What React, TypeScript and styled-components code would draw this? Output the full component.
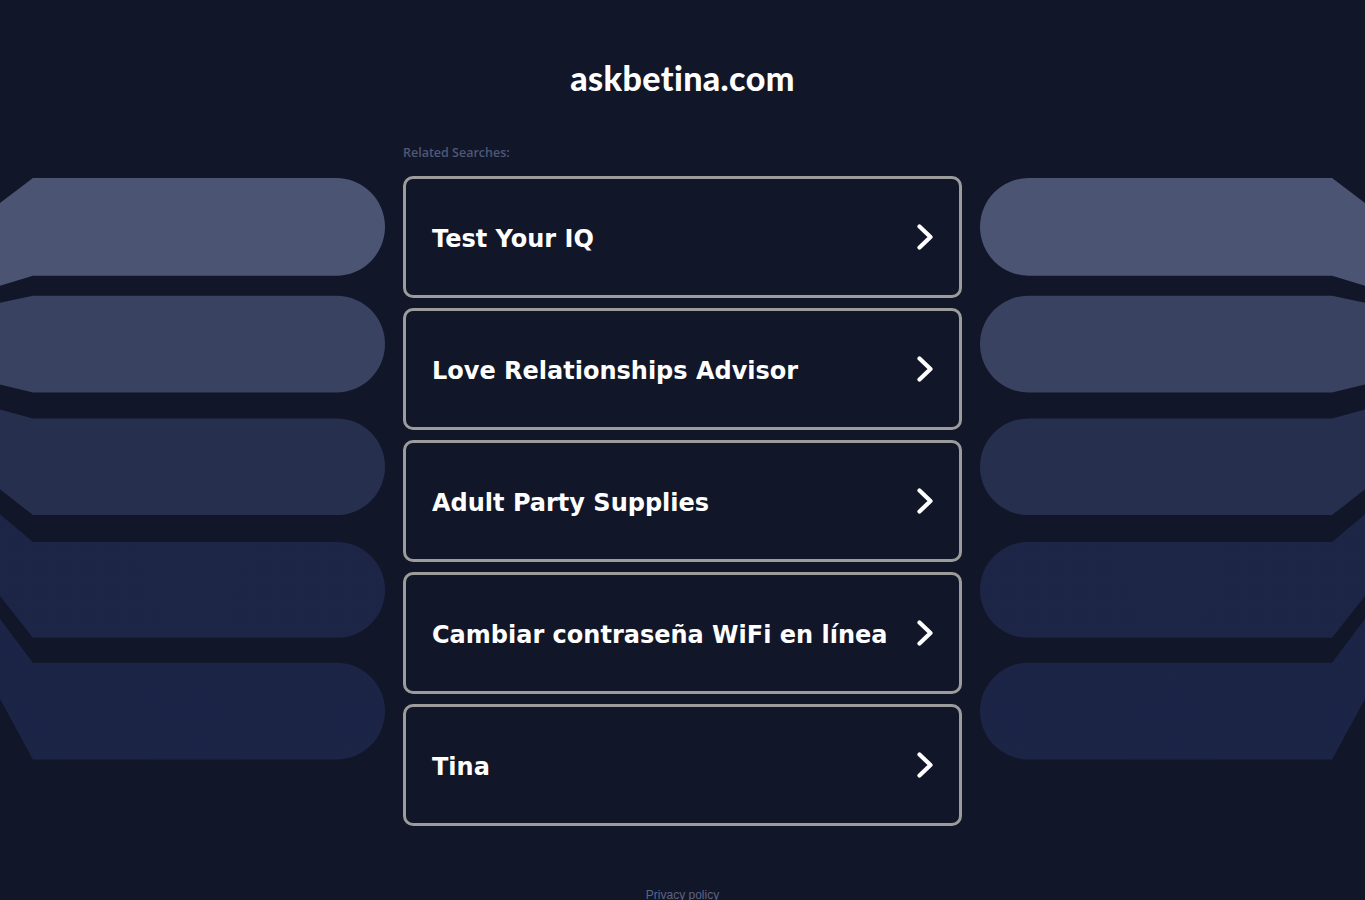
import React from 'react';
import styled, { createGlobalStyle } from 'styled-components';

const GlobalStyle = createGlobalStyle`
    html, body {
        margin: 0;
        padding: 0;
        background-color: #111729;
    }
`;

const Page = styled.div`
    min-height: 900px;
    display: flex;
    flex-direction: column;
    align-items: stretch;
    background-color: #111729;
    overflow: hidden;
`;

const Header = styled.h1`
    margin: 0;
    padding-top: 58px;
    height: 42px;
    line-height: 40px;
    text-align: center;
    font-family: Lato, 'Open Sans', sans-serif;
    font-weight: 900;
    font-size: 34px;
    letter-spacing: 0.4px;
    color: #ffffff;
`;

const Body = styled.div`
    display: grid;
    grid-template-columns: 1fr 559px 1fr;
    grid-template-rows: auto auto;
    column-gap: 18px;
    margin-top: 46px;
`;

const Label = styled.div`
    grid-column: 2;
    grid-row: 1;
    height: 14px;
    line-height: 14px;
    margin-bottom: 16px;
    font-family: 'Open Sans', Lato, sans-serif;
    font-weight: 600;
    font-size: 12.5px;
    color: #4f5877;
`;

const Side = styled.div<{ $flip?: boolean }>`
    grid-row: 2;
    grid-column: ${(p) => (p.$flip ? 3 : 1)};
    padding-top: 2px;
    transform: ${(p) => (p.$flip ? 'scaleX(-1)' : 'none')};

    svg {
        display: block;
    }
`;

const List = styled.div`
    grid-column: 2;
    grid-row: 2;
    display: flex;
    flex-direction: column;
    gap: 10px;
`;

const Card = styled.a`
    box-sizing: border-box;
    height: 122px;
    display: flex;
    align-items: center;
    justify-content: space-between;
    padding: 0 26px 0 26px;
    border: 3px solid #9c9c9c;
    border-radius: 10px;
    text-decoration: none;
    color: #ffffff;
    font-family: 'DejaVu Sans', Verdana, sans-serif;
    font-weight: 700;
    font-size: 24px;
`;

const CardText = styled.span`
    padding-top: 3px;
`;

const Footer = styled.div`
    margin-top: 62px;
    text-align: center;
    font-family: 'Liberation Sans', Arial, sans-serif;
    font-size: 12px;
    color: #5c6483;
`;

type Band = {
    top: number
    bottom: number
    leftTop: number
    leftBottom: number
    fill: string
    dotted?: boolean
}

// five bands fanning out toward the window edge
const bands: Band[] = [
    { top: 0, bottom: 98, leftTop: 25, leftBottom: 108, fill: '#4b5573' },
    { top: 118, bottom: 215, leftTop: 125, leftBottom: 207, fill: '#394260' },
    { top: 241, bottom: 338, leftTop: 232, leftBottom: 312, fill: '#272f4e' },
    { top: 365, bottom: 461, leftTop: 337, leftBottom: 419, fill: '#1d2546', dotted: true },
    { top: 486, bottom: 583, leftTop: 442, leftBottom: 522, fill: '#1b2445', dotted: true },
];

const bandPath = (b: Band) => {
    const r = (b.bottom - b.top) / 2;
    return `M0 ${b.leftTop} L33 ${b.top} L${386 - r} ${b.top} A${r} ${r} 0 0 1 ${386 - r} ${b.bottom} L33 ${b.bottom} L0 ${b.leftBottom} Z`;
};

const Bands = () => (
    <svg width="100%" height="590" viewBox="0 0 386 590" preserveAspectRatio="xMaxYMin meet">
        <defs>
            <pattern id="dots" width="3" height="3" patternUnits="userSpaceOnUse">
                <circle cx="1" cy="1" r="0.5" fill="#2a3560" />
            </pattern>
        </defs>
        {bands.map((b, i) => (
            <g key={i}>
                <path d={bandPath(b)} fill={b.fill} />
                {b.dotted && <path d={bandPath(b)} fill="url(#dots)" opacity={0.35} />}
            </g>
        ))}
    </svg>
);

const Chevron = () => (
    <svg width="16" height="26" viewBox="0 0 16 26">
        <path d="M2.5 2.5 L13.5 13 L2.5 23.5" fill="none" stroke="#ffffff" strokeWidth="4.2" strokeLinecap="round" strokeLinejoin="round" />
    </svg>
);

const searches = [
    'Test Your IQ',
    'Love Relationships Advisor',
    'Adult Party Supplies',
    'Cambiar contraseña WiFi en línea',
    'Tina',
];

const App = () => {
    return (
        <Page>
            <GlobalStyle />
            <Header>askbetina.com</Header>
            <Body>
                <Label>Related Searches:</Label>
                <Side>
                    <Bands />
                </Side>
                <List>
                    {searches.map((s) => (
                        <Card key={s} href="#">
                            <CardText>{s}</CardText>
                            <Chevron />
                        </Card>
                    ))}
                </List>
                <Side $flip>
                    <Bands />
                </Side>
            </Body>
            <Footer>Privacy policy</Footer>
        </Page>
    );
};

export default App;
